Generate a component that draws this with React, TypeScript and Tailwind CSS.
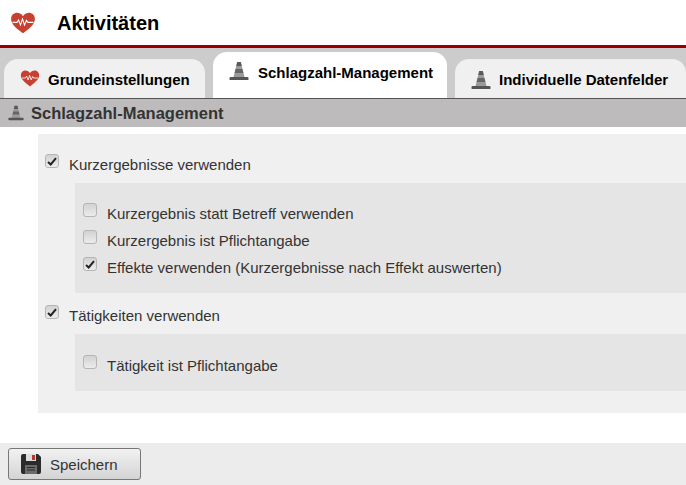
function Heart({ size }: { size: number }) {
  return (
    <svg width={size} height={size * 0.84} viewBox="0 0 26 22" className="shrink-0">
      <path d="M13 21.5 C8 17.5 1 13 1 7 C1 3 4 .8 7 .8 C9.5 .8 11.8 2.2 13 4.2 C14.2 2.2 16.5 .8 19 .8 C22 .8 25 3 25 7 C25 13 18 17.5 13 21.5Z" fill="#c8402f" />
      <path d="M2.5 10.5 H7 L8.5 8 L10.5 13 L12.5 7 L14.5 13 L16.5 8.5 L18 10.5 H23.5" fill="none" stroke="#fff" strokeWidth="1.1" />
    </svg>
  );
}

function Cone({ size }: { size: number }) {
  return (
    <svg width={size} height={size} viewBox="0 0 20 20" className="shrink-0">
      <path d="M8.2 1 H11.8 L15.6 16.5 H4.4Z" fill="#9a9a9a" />
      <path d="M8.2 1 H11.8 L12.7 5 H7.3Z" fill="#5a5a5a" />
      <path d="M6.6 8 H13.4 L14.4 12 H5.6Z" fill="#666" />
      <path d="M1.5 16 H18.5 Q19.5 16 19.5 17 V18.5 Q19.5 19 18.5 19 H1.5 Q.5 19 .5 18.5 V17 Q.5 16 1.5 16Z" fill="#555" />
    </svg>
  );
}

function Floppy() {
  return (
    <svg width="20" height="20" viewBox="0 0 20 20" className="shrink-0">
      <path d="M0 2 Q0 0 2 0 H17 L20 3 V18 Q20 20 18 20 H2 Q0 20 0 18Z" fill="#2b2b2b" />
      <rect x="5" y="0" width="10" height="7" fill="#dddddd" />
      <rect x="11" y="1" width="3" height="5" fill="#c8322d" />
      <rect x="4" y="11" width="12" height="9" fill="#6b6b6b" />
      <path d="M6 13.5 H14 M6 16 H14" stroke="#2b2b2b" strokeWidth="1" />
    </svg>
  );
}

function Check({ checked }: { checked?: boolean }) {
  return (
    <span className="flex h-[14px] w-[14px] shrink-0 items-center justify-center rounded-[3px] border border-[#b5b5b5] bg-gradient-to-b from-[#d2d2d2] to-[#ececec]">
      {checked && (
        <svg width="10" height="9" viewBox="0 0 10 9">
          <path d="M1 5 L3.7 7.5 L9 1.2" fill="none" stroke="#222" strokeWidth="2" />
        </svg>
      )}
    </span>
  );
}

function Row({ label, checked, className }: { label: string; checked?: boolean; className?: string }) {
  return (
    <div className={`flex items-start ${className ?? ''}`}>
      <Check checked={checked} />
      <span className="ml-[10px] mt-[2px] text-[15px] leading-[18px] text-[#333]">{label}</span>
    </div>
  );
}

const tabs = [
  { label: 'Grundeinstellungen', icon: 'heart', cls: 'mt-[7px] h-[39px] w-[201px] bg-[#f0f0f0] pl-[16px] pt-[11px]', gap: 'ml-[8px] mt-[1px]' },
  { label: 'Schlagzahl-Management', icon: 'cone', cls: 'h-[46px] w-[234px] bg-white pl-[16px] pt-[9px]', gap: 'ml-[9px] mt-[3px]' },
  { label: 'Individuelle Datenfelder', icon: 'cone', cls: 'mt-[7px] h-[39px] w-[231px] bg-[#f0f0f0] pl-[16px] pt-[11px]', gap: 'ml-[8px] mt-[1px]' },
];

export default function App() {
  return (
    <div className="flex h-[485px] w-[686px] flex-col overflow-hidden bg-white font-['Liberation_Sans',Arial,sans-serif]">
      <header className="flex h-[45px] items-center pl-[10px]">
        <Heart size={26} />
        <h1 className="ml-[21px] text-[20px] font-bold text-black">Aktivitäten</h1>
      </header>
      <div className="h-[3px] bg-[#990000]" />

      <div className="flex h-[50px] items-end gap-[8px] overflow-hidden bg-[#cccccc] pl-[4px]">
        {tabs.map(tab => (
          <div key={tab.label} className={`flex shrink-0 items-start rounded-t-[14px] ${tab.cls}`}>
            {tab.icon === 'heart' ? <Heart size={20} /> : <Cone size={20} />}
            <span className={`text-[15px] font-bold leading-[18px] text-black ${tab.gap}`}>{tab.label}</span>
          </div>
        ))}
      </div>

      <div className="flex h-[29px] items-center border-t border-[#555] bg-[#bdbbbb] pl-[8px]">
        <Cone size={16} />
        <h2 className="ml-[7px] text-[16.5px] font-bold text-[#333]">Schlagzahl-Management</h2>
      </div>

      <main className="flex-1 pl-[38px] pt-[7px]">
        <div className="h-[279px] bg-[#f0f0f0] pt-[20px]">
          <Row label="Kurzergebnisse verwenden" checked className="pl-[7px]" />
          <div className="ml-[37px] mt-[9px] h-[110px] bg-[#e5e5e5] pl-[8px] pt-[20px]">
            <Row label="Kurzergebnis statt Betreff verwenden" />
            <Row label="Kurzergebnis ist Pflichtangabe" className="mt-[7px]" />
            <Row label="Effekte verwenden (Kurzergebnisse nach Effekt auswerten)" checked className="mt-[7px]" />
          </div>
          <Row label="Tätigkeiten verwenden" checked className="mt-[12px] pl-[7px]" />
          <div className="ml-[37px] mt-[9px] h-[57px] bg-[#e5e5e5] pl-[8px] pt-[21px]">
            <Row label="Tätigkeit ist Pflichtangabe" />
          </div>
        </div>
      </main>

      <footer className="flex h-[42px] items-center bg-[#ececec] pl-[8px]">
        <button className="flex h-[32px] w-[133px] items-center rounded-[3px] border border-[#777] bg-gradient-to-b from-[#f2f2f2] to-[#d4d4d4] pl-[12px]">
          <Floppy />
          <span className="ml-[9px] mt-[3px] text-[15px] text-[#333]">Speichern</span>
        </button>
      </footer>
    </div>
  );
}
